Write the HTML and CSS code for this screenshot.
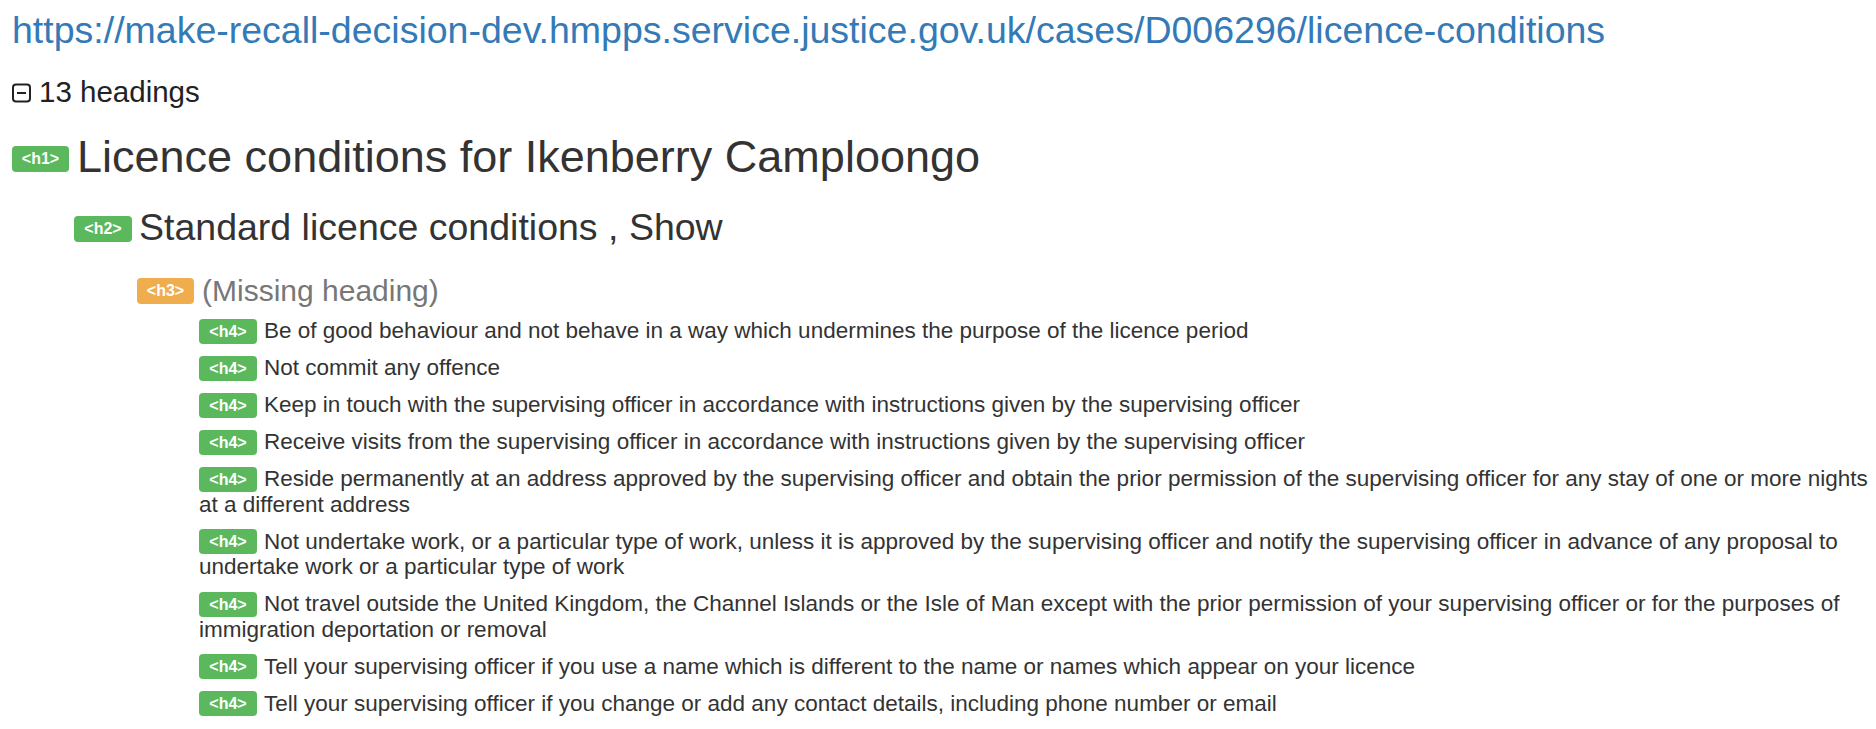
FILE: index.html
```html
<!DOCTYPE html>
<html lang="en">
<head>
<meta charset="utf-8">
<title>Headings</title>
<link rel="stylesheet" href="styles.css">
</head>
<body>
<div class="page">
  <a class="url" href="#">https://make-recall-decision-dev.hmpps.service.justice.gov.uk/cases/D006296/licence-conditions</a>
  <div class="summary">
    <svg class="toggle" width="20" height="20" viewBox="0 0 20 20" aria-hidden="true"><rect x="1" y="1.5" width="17" height="17" rx="3" ry="3" fill="none" stroke="#222" stroke-width="2"/><rect x="5" y="9" width="9" height="2" fill="#222"/></svg>
    <span>13 headings</span>
  </div>
  <ul class="tree">
    <li class="h h1"><span class="tag">&lt;h1&gt;</span>Licence conditions for Ikenberry Camploongo</li>
    <li class="h h2"><span class="tag">&lt;h2&gt;</span>Standard licence conditions , Show</li>
    <li class="h h3"><span class="tag tag-warn">&lt;h3&gt;</span><span class="missing">(Missing heading)</span></li>
    <li class="h h4"><span class="tag">&lt;h4&gt;</span>Be of good behaviour and not behave in a way which undermines the purpose of the licence period</li>
    <li class="h h4"><span class="tag">&lt;h4&gt;</span>Not commit any offence</li>
    <li class="h h4"><span class="tag">&lt;h4&gt;</span>Keep in touch with the supervising officer in accordance with instructions given by the supervising officer</li>
    <li class="h h4"><span class="tag">&lt;h4&gt;</span>Receive visits from the supervising officer in accordance with instructions given by the supervising officer</li>
    <li class="h h4"><span class="tag">&lt;h4&gt;</span>Reside permanently at an address approved by the supervising officer and obtain the prior permission of the supervising officer for any stay of one or more nights at a different address</li>
    <li class="h h4"><span class="tag">&lt;h4&gt;</span>Not undertake work, or a particular type of work, unless it is approved by the supervising officer and notify the supervising officer in advance of any proposal to undertake work or a particular type of work</li>
    <li class="h h4"><span class="tag">&lt;h4&gt;</span>Not travel outside the United Kingdom, the Channel Islands or the Isle of Man except with the prior permission of your supervising officer or for the purposes of immigration deportation or removal</li>
    <li class="h h4"><span class="tag">&lt;h4&gt;</span>Tell your supervising officer if you use a name which is different to the name or names which appear on your licence</li>
    <li class="h h4"><span class="tag">&lt;h4&gt;</span>Tell your supervising officer if you change or add any contact details, including phone number or email</li>
  </ul>
</div>
</body>
</html>
```
FILE: styles.css
```css
html, body {
  margin: 0;
  padding: 0;
  background: #fff;
}
body {
  font-family: "Liberation Sans", Arial, sans-serif;
  color: #333;
}
.page {
  padding: 9px 5px 0 12px;
}
.url {
  display: block;
  font-size: 37.5px;
  line-height: 42px;
  color: #337ab7;
  text-decoration: none;
  white-space: nowrap;
}
.summary {
  margin-top: 25px;
  display: flex;
  align-items: center;
  gap: 7px;
  font-size: 29.5px;
  line-height: 32px;
  color: #222;
}
.toggle {
  display: block;
  flex: none;
  margin-top: 1px;
}
.tree {
  list-style: none;
  margin: 0;
  padding: 0;
}
.h {
  margin: 0;
}
.tag {
  display: inline-block;
  box-sizing: border-box;
  width: 57px;
  height: 26px;
  padding: 5px 0;
  margin-right: 8px;
  background: #5cb85c;
  color: #fff;
  border-radius: 4px;
  font-size: 16px;
  line-height: 16px;
  font-weight: bold;
  text-align: center;
}
.tag-warn {
  background: #f0ad4e;
}
.h1 {
  margin-top: 23px;
  font-size: 45px;
  line-height: 52px;
}
.h1 .tag { vertical-align: 8.5px; }
.h2 {
  margin-top: 23px;
  padding-left: 62px;
  font-size: 37.5px;
  line-height: 42px;
}
.h2 .tag { vertical-align: 6px; width: 58px; margin-right: 7px; }
.h3 {
  margin-top: 26px;
  padding-left: 125px;
  font-size: 30px;
  line-height: 34px;
}
.h3 .tag { vertical-align: 5.5px; margin-right: 8px; }
.missing {
  color: #777;
}
.h4 {
  margin-top: 11.5px;
  padding-left: 187px;
  font-size: 22.5px;
  line-height: 25.5px;
}
.h3 + .h4 {
  margin-top: 10px;
}
.h4 .tag {
  width: 58px;
  height: 25px;
  padding: 5px 0 4px;
  margin-right: 7px;
  vertical-align: 1.5px;
}
```
